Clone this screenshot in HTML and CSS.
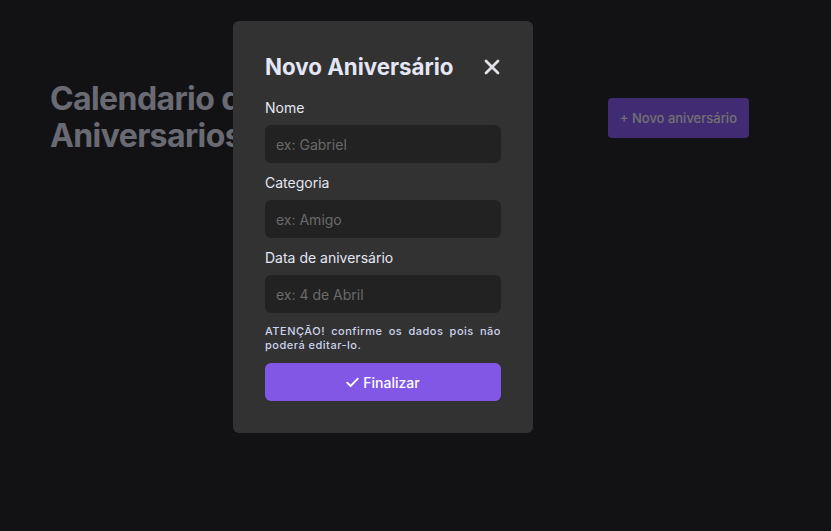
FILE: index.html
```html
<!DOCTYPE html>
<html lang="pt-BR">
<head>
<meta charset="utf-8">
<title>Calendario de Aniversarios</title>
<link rel="stylesheet" href="styles.css">
</head>
<body>
<main class="page">
  <header class="header">
    <h1 class="page-title">Calendario de Aniversarios</h1>
    <button class="new-btn">+ Novo aniversário</button>
  </header>
</main>
<div class="overlay">
  <div class="modal">
    <div class="modal-head">
      <h2 class="modal-title">Novo Aniversário</h2>
      <button class="close" aria-label="Fechar">
        <svg width="16" height="16" viewBox="0 0 16 16"><path d="M2 2 L14 14 M14 2 L2 14" stroke="#e1e1e6" stroke-width="2.8" stroke-linecap="round"/></svg>
      </button>
    </div>
    <form class="form">
      <label class="field">
        <span class="label">Nome</span>
        <input class="input" placeholder="ex: Gabriel">
      </label>
      <label class="field">
        <span class="label">Categoria</span>
        <input class="input" placeholder="ex: Amigo">
      </label>
      <label class="field">
        <span class="label">Data de aniversário</span>
        <input class="input" placeholder="ex: 4 de Abril">
      </label>
      <p class="warning">ATENÇÃO! confirme os dados pois não poderá editar-lo.</p>
      <button type="button" class="submit">
        <svg width="13" height="11" viewBox="0 0 13 11"><path d="M1.2 5.6 L4.6 9 L11.8 1.6" fill="none" stroke="#fff" stroke-width="1.8" stroke-linecap="round" stroke-linejoin="round"/></svg>
        Finalizar
      </button>
    </form>
  </div>
</div>
</body>
</html>
```
FILE: styles.css
```css
* { box-sizing: border-box; }
html, body { margin: 0; height: 100%; }
body {
  background: #242428;
  font-family: Inter, "Noto Sans", sans-serif;
  color: #c4c4cc;
}
.page { padding: 80px 82px 0 50px; }
.header {
  display: flex;
  justify-content: space-between;
  align-items: flex-start;
}
.page-title {
  margin: 0;
  width: 250px;
  font-size: 32px;
  line-height: 37px;
  font-weight: 700;
  letter-spacing: -0.6px;
  color: #d4d4e4;
}
.new-btn {
  margin-top: 18px;
  height: 40px;
  padding: 0 12px;
  border: 0;
  border-radius: 4px;
  background: #8257e5;
  color: #e1e1e6;
  font: 500 13px Inter, sans-serif;
}
.overlay {
  position: fixed;
  inset: 0;
  background: rgba(0, 0, 0, 0.5);
}
.modal {
  position: absolute;
  left: 233px;
  top: 21px;
  width: 300px;
  padding: 32px;
  background: #323232;
  border-radius: 6px;
}
.modal-head {
  display: flex;
  justify-content: space-between;
  align-items: center;
  margin-bottom: 18px;
}
.modal-title {
  margin: 0;
  font-size: 22.3px;
  line-height: 28px;
  font-weight: 700;
  color: #e4e6f4;
}
.close {
  background: none;
  border: 0;
  padding: 0;
  margin-right: 1px;
  display: flex;
}
.form { display: flex; flex-direction: column; }
.field { display: flex; flex-direction: column; gap: 9px; margin-bottom: 11px; }
.label { font-size: 14px; line-height: 17px; color: #e4e6f4; }
.input {
  height: 38px;
  border: 0;
  border-radius: 6px;
  background: #222222;
  padding: 0 11px;
  font: 14px Inter, sans-serif;
  color: #e1e1e6;
  outline: none;
}
.input::placeholder { color: #6a6a6a; }
.warning {
  margin: 0 0 11px;
  font-size: 11px;
  line-height: 14px;
  font-weight: 500;
  letter-spacing: 0.5px;
  text-align: justify;
  color: #cdd3ec;
}
.submit {
  height: 38px;
  border: 0;
  border-radius: 6px;
  background: #8257e5;
  color: #ffffff;
  font: 500 14px Inter, sans-serif;
  display: flex;
  align-items: center;
  justify-content: center;
  gap: 4px;
}
```
